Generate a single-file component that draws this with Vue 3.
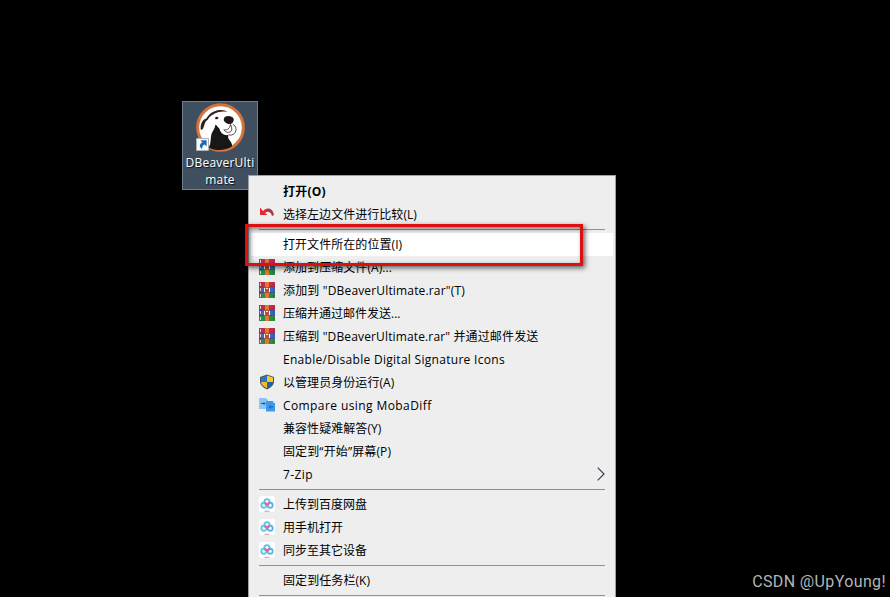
<template>
  <div class="desktop">
    <!-- Desktop shortcut -->
    <div class="shortcut">
      <svg class="logo" viewBox="60 18 148 148">
        <circle cx="134" cy="92" r="69" fill="#fff" stroke="#d4733c" stroke-width="9" />
        <path d="M74 94 C74 80 80 68 91 65 C98 51 113 41 132 39 C142 38 151 41 155 45 C140 42 124 45 113 52 C103 57 98 63 95 69 C87 72 87 82 81 96 C77 101 74 99 74 94Z" fill="#30231f" />
        <path d="M144 66 C146 57 158 55 170 61 C177 65 174 77 166 81 C156 83 142 75 144 66Z" fill="#1c1817" />
        <path d="M118 62c4-4 9-2 10 2-2 3-7 4-10 2Z" fill="#211a18" />
        <path d="M99 153 C106 139 103 126 107 111 C112 100 117 95 119 83 C124 87 127 92 131 96 C134 109 145 117 158 115 C157 120 156 123 159 127 C165 135 170 142 169 149 C148 163 119 163 99 153Z" fill="#191716" />
        <path d="M164 80 C164 93 156 101 144 99 C149 107 160 110 166 103 C170 97 167 89 165 84 M171 82 C182 88 184 101 176 110 C171 115 164 116 159 114" fill="none" stroke="#30231f" stroke-width="2.500" />
      </svg>
      <svg class="arrow" viewBox="0 0 13 13">
        <path d="M.5 .5h12v12H.5z" fill="#f7f8f9" stroke="#adb1b5" />
        <path d="M4.400 2.300h6.200v6L8.500 6.400C6.600 7.400 6 8.900 6.200 11 2.800 9 3.400 6 6.300 4.300Z" fill="#2467b1" />
      </svg>
      <div class="name">DBeaverUlti<br />mate</div>
    </div>

    <!-- Context menu -->
    <div class="menu">
      <template v-for="(item, index) in items" :key="index">
        <div v-if="item.line" class="line"></div>
        <div v-else class="item" :class="{ bold: item.bold, hover: item.hover }">
          <span class="icon">
            <svg v-if="item.icon === 'compare'" viewBox="0 0 16 16">
              <path d="M5 4c4-3 9-2 10 5l-2 1C12 6 9 5 6 6.500Z" fill="#a04044" />
              <path d="M1 1.500V9h7.500L6 7l3-2.500L7 3 4 5Z" fill="#e8292c" />
            </svg>
            <svg v-else-if="item.icon === 'rar'" viewBox="0 0 16 16">
              <path d="M0 0h16v5H0z" fill="#c02c4b" />
              <path d="M0 5h16v6H0z" fill="#3d65bd" />
              <path d="M0 11h16v5H0z" fill="#2d8c43" />
              <path d="M0 5h16M0 10.500h16" stroke="#49365c" stroke-width=".6" />
              <path d="M1 1h1v3H1zM1 6h1v3H1zM1 12h1v3H1z" fill="#e6c7cf" />
              <path d="M14 1h1v3h-1zM14 6h1v3h-1zM14 12h1v3h-1z" fill="#694069" />
              <path d="M6 0h4v16H6z" fill="#e6762c" />
              <path d="M5 5h6v6H5z" fill="#b0523c" />
              <path d="M5 6h1v4H5zM10 6h1v4h-1zM7 6h2v1H7z" fill="#fff0d5" />
            </svg>
            <svg v-else-if="item.icon === 'shield'" viewBox="0 0 16 16">
              <path d="M8 .5 15 3v4.500c0 3.500-3 6-7 8-4-2-7-4.500-7-8V3Z" fill="#465461" />
              <path d="M8 1.600v6.400H2V3.600Z" fill="#2578c6" />
              <path d="M8 1.600 14 3.600V8H8Z" fill="#ffc52e" />
              <path d="M2 8h6v6.400C5 12.700 2.300 11 2 8Z" fill="#f8b827" />
              <path d="M8 8h6c-.3 3-3 4.700-6 6.400Z" fill="#1965b4" />
            </svg>
            <svg v-else-if="item.icon === 'diff'" viewBox="0 0 16 16">
              <path d="M0 1h7l2 2v9H0z" fill="#8bc5f8" />
              <path d="M7 4h7l2 2v8.500H7z" fill="#3c99ea" />
              <path d="M14 4v2h2z" fill="#b9ddfb" />
              <path d="M2 6.500h4M4.500 5 6 6.500 4.500 8M14 10h-4M11.500 8.500 10 10l1.500 1.500" fill="none" stroke="#155dab" />
            </svg>
            <svg v-else-if="item.icon === 'netdisk'" viewBox="0 0 16 16">
              <rect width="16" height="16" rx="2.500" fill="#fff" />
              <g fill="none" stroke-width="1.900">
                <circle cx="8" cy="5.700" r="2.600" stroke="#62bcf0" />
                <circle cx="4.800" cy="9.300" r="2.500" stroke="#5cc8ee" />
                <circle cx="11.200" cy="9.300" r="2.500" stroke="#5eb1eb" />
                <path d="M5.500 7c1.200 0 1.500 1.700 2.500 1.700S9.500 7 10.500 7" stroke="#ed6577" />
              </g>
              <path d="M5.500 15.300h5" stroke="#e58f9b" />
            </svg>
          </span>
          <span class="text" :style="{ letterSpacing: item.spacing }">{{ item.text }}</span>
          <svg v-if="item.sub" class="chevron" viewBox="0 0 8 14">
            <path d="M.7 .7 7 7 .7 13.300" fill="none" stroke="#3c3c50" stroke-width="1.200" />
          </svg>
        </div>
      </template>
    </div>

    <div class="mark"></div>
    <div class="watermark">CSDN @UpYoung!</div>
  </div>
</template>

<script setup>
const items = [
  { text: "打开(O)", bold: true, spacing: "0.2px" },
  { text: "选择左边文件进行比较(L)", icon: "compare", spacing: "0.04px" },
  { line: true },
  { text: "打开文件所在的位置(I)", hover: true, spacing: "0.06px" },
  { text: "添加到压缩文件(A)...", icon: "rar", spacing: "0.06px" },
  { text: '添加到 "DBeaverUltimate.rar"(T)', icon: "rar", spacing: "0.16px" },
  { text: "压缩并通过邮件发送...", icon: "rar" },
  { text: '压缩到 "DBeaverUltimate.rar" 并通过邮件发送', icon: "rar", spacing: "0.14px" },
  { text: "Enable/Disable Digital Signature Icons", spacing: "0.29px" },
  { text: "以管理员身份运行(A)", icon: "shield", spacing: "0.06px" },
  { text: "Compare using MobaDiff", icon: "diff", spacing: "0.41px" },
  { text: "兼容性疑难解答(Y)", spacing: "0.06px" },
  { text: "固定到“开始”屏幕(P)", spacing: "0.12px" },
  { text: "7-Zip", sub: true, spacing: "0.4px" },
  { line: true },
  { text: "上传到百度网盘", icon: "netdisk" },
  { text: "用手机打开", icon: "netdisk" },
  { text: "同步至其它设备", icon: "netdisk" },
  { line: true },
  { text: "固定到任务栏(K)", spacing: "0.08px" },
  { line: true }
];
</script>

<style>
body {
  background: #000;
  overflow: hidden;
}
</style>

<style scoped>
.desktop {
  position: relative;
  width: 890px;
  height: 597px;
  overflow: hidden;
  background: #000;
  font-family: "Open Sans", "Noto Sans CJK SC", sans-serif;
}

/* shortcut tile */
.shortcut {
  position: absolute;
  left: 182px;
  top: 101px;
  width: 76px;
  height: 89px;
  box-sizing: border-box;
  border: 1px solid #70808f;
  background: #3f4f60;
}
.logo {
  display: block;
  width: 49px;
  height: 49px;
  margin: 1px auto 0;
}
.arrow {
  position: absolute;
  left: 13px;
  top: 36px;
  width: 13px;
  height: 13px;
}
.name {
  margin-top: 2px;
  color: #fff;
  font-size: 12px;
  line-height: 17px;
  letter-spacing: 0.2px;
  text-align: center;
  white-space: nowrap;
  text-shadow: 1px 1px 1px #111;
}

/* menu */
.menu {
  position: absolute;
  left: 248px;
  top: 175px;
  width: 368px;
  height: 430px;
  box-sizing: border-box;
  padding: 4px 2px;
  border: 1px solid #a0a0a0;
  background: #eee;
  color: #000;
}
.item {
  display: flex;
  align-items: center;
  height: 23px;
  padding: 0 8px;
  font-size: 12px;
  line-height: 23px;
  white-space: pre;
}
.item.hover {
  background: #fff;
}
.item.bold {
  font-weight: bold;
}
.icon {
  width: 16px;
  height: 16px;
  margin: 0 8px 1px 0;
}
.icon svg {
  display: block;
  width: 16px;
  height: 16px;
}
.chevron {
  width: 8px;
  height: 14px;
  margin: 0 0 1px auto;
}
.line {
  height: 1px;
  margin: 3px 8px;
  background: #919191;
}

/* red highlight frame */
.mark {
  position: absolute;
  left: 245px;
  top: 224px;
  width: 338px;
  height: 42px;
  box-sizing: border-box;
  border: 3px solid #dc1010;
  box-shadow: 2px 2px 5px rgba(0, 0, 0, 0.6), inset 2px 2px 5px rgba(0, 0, 0, 0.5);
}

.watermark {
  position: absolute;
  right: 4px;
  bottom: 4px;
  color: #b5b5b5;
  font-family: Roboto, sans-serif;
  font-size: 16px;
  line-height: 22px;
  letter-spacing: 0.38px;
}
</style>
